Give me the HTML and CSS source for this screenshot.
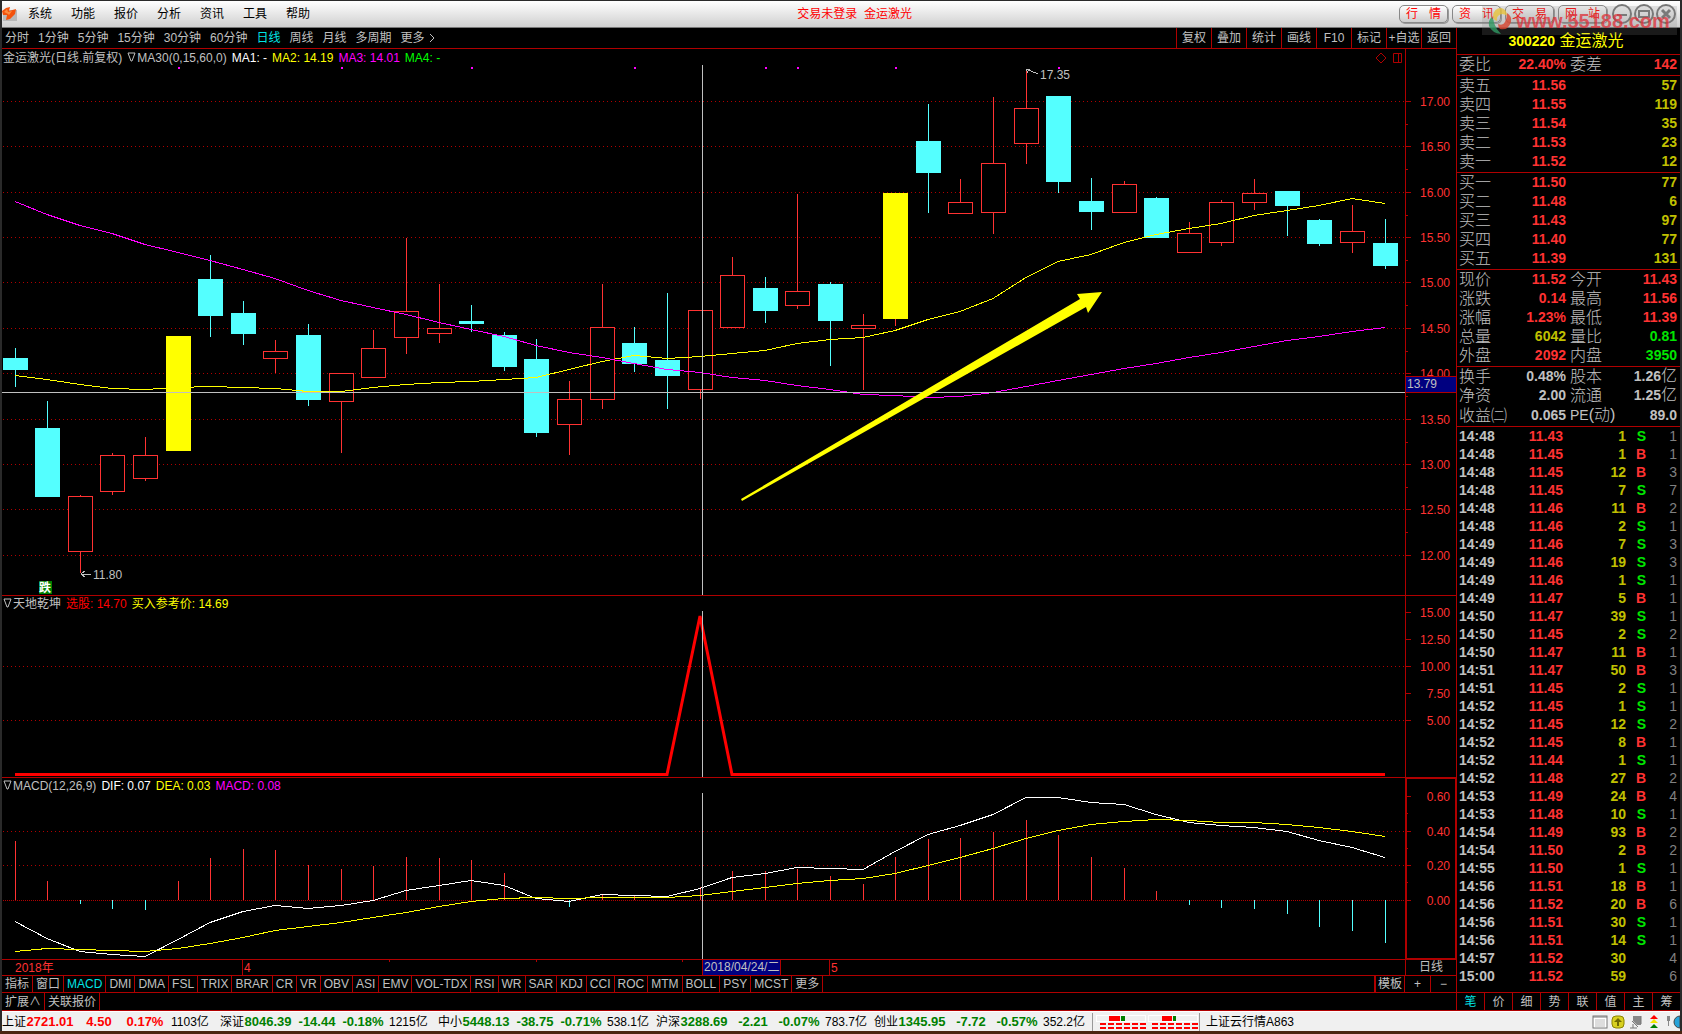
FILE: index.html
```html
<!DOCTYPE html>
<html lang="zh-CN">
<head>
    <meta charset="UTF-8">
    <meta name="viewport" content="width=device-width, initial-scale=1.0">
    <title>金运激光 300220</title>
    <link rel="stylesheet" href="styles.css">
</head>
<body>
    <header class="menubar">
        <svg class="logo" viewBox="0 0 16 16">
            <rect x="1" y="4" width="14" height="11" fill="#b8b8b8"/>
            <path d="M0 5 L4 2 L8 1 L7 5 L14 3 L13 8 L8 13 L4 14 L5 9 L1 9 Z" fill="#f4510b"/>
            <path d="M2 6 L5 3 L6 6 L10 5 L7 9 L6 8 Z" fill="#ff8a3c"/>
        </svg>
        <nav class="menu">
            <button>系统</button>
            <button>功能</button>
            <button>报价</button>
            <button>分析</button>
            <button>资讯</button>
            <button>工具</button>
            <button>帮助</button>
        </nav>
        <p class="window-title">交易未登录&nbsp; 金运激光</p>
        <div class="quick">
            <button><span>行</span><span>情</span></button>
            <button><span>资</span><span>讯</span></button>
            <button><span>交</span><span>易</span></button>
            <button><span>网</span><span>站</span></button>
        </div>
        <div class="window-buttons">
            <button aria-label="最小化"><svg viewBox="0 0 20 20"><circle cx="10" cy="10" r="9"/><path d="M5 11h10"/></svg></button>
            <button aria-label="还原"><svg viewBox="0 0 20 20"><circle cx="10" cy="10" r="9"/><path d="M5 7h10v6H5z"/></svg></button>
            <button aria-label="关闭"><svg viewBox="0 0 20 20"><circle cx="10" cy="10" r="9"/><path d="M6 6l8 8M14 6l-8 8" stroke-width="3"/></svg></button>
        </div>
        <div class="watermark">
            <svg viewBox="0 0 24 28">
                <path d="M5 9 Q6 1 13 1 Q19 2 19 9 Q14 5 10 9 Q8 11 9 14 Q5 13 5 9Z" fill="#e8c33c"/>
                <path d="M19 6 Q24 9 23 15 Q20 24 12 22 Q10 20 10 17 Q15 19 17 15 Q19 11 19 6Z" fill="#d9452f"/>
                <path d="M4 10 Q6 13 6 16 Q8 22 13 27 Q4 26 1 19 Q0 13 4 10Z" fill="#2f9a63"/>
            </svg>
            <span>www.55188.com</span>
        </div>
    </header>

    <div class="workspace">
        <main class="left">
            <div class="toolbar">
                <div class="periods">
                    <button>分时</button>
                    <button>1分钟</button>
                    <button>5分钟</button>
                    <button>15分钟</button>
                    <button>30分钟</button>
                    <button>60分钟</button>
                    <button class="active">日线</button>
                    <button>周线</button>
                    <button>月线</button>
                    <button>多周期</button>
                    <button>更多<svg class="chevron" viewBox="0 0 8 10"><path d="M2 1l4 4-4 4"/></svg></button>
                </div>
                <div class="tools">
                    <button>复权</button>
                    <button>叠加</button>
                    <button>统计</button>
                    <button>画线</button>
                    <button>F10</button>
                    <button>标记</button>
                    <button>+自选</button>
                    <button>返回</button>
                </div>
            </div>

            <section class="panel panel-main">
                <div class="plot-col">
                    <div class="legend">
                        <span>金运激光(日线.前复权)</span>
                        <span><svg class="tri" viewBox="0 0 9 10"><path d="M1 1h7L5 9H4z"/></svg>MA30(0,15,60,0)</span>
                        <span class="white">MA1: -</span>
                        <span class="yellow">MA2: 14.19</span>
                        <span class="magenta">MA3: 14.01</span>
                        <span class="green">MA4: -</span>
                        <svg class="legend-icons" viewBox="0 0 28 12"><path d="M6 1l5 5-5 5-5-5zM18.5 1.5h8v9h-8zM23.5 1.5v9"/></svg>
                    </div>
                    <svg class="plot" id="pricePlot" viewBox="0 0 1403 530" preserveAspectRatio="none"></svg>
                </div>
                <svg class="axis" id="priceAxis" viewBox="0 0 50 546" preserveAspectRatio="none"></svg>
            </section>

            <section class="panel panel-sub">
                <div class="plot-col">
                    <div class="legend">
                        <span><svg class="tri" viewBox="0 0 9 10"><path d="M1 1h7L5 9H4z"/></svg>天地乾坤</span>
                        <span class="red">选股: 14.70</span>
                        <span class="yellow">买入参考价: 14.69</span>
                    </div>
                    <svg class="plot" id="signalPlot" viewBox="0 0 1403 166" preserveAspectRatio="none"></svg>
                </div>
                <svg class="axis" id="signalAxis" viewBox="0 0 50 181" preserveAspectRatio="none"></svg>
            </section>

            <section class="panel panel-sub selected">
                <div class="plot-col">
                    <div class="legend">
                        <span><svg class="tri" viewBox="0 0 9 10"><path d="M1 1h7L5 9H4z"/></svg>MACD(12,26,9)</span>
                        <span class="white">DIF: 0.07</span>
                        <span class="yellow">DEA: 0.03</span>
                        <span class="magenta">MACD: 0.08</span>
                    </div>
                    <svg class="plot" id="macdPlot" viewBox="0 0 1403 166" preserveAspectRatio="none"></svg>
                </div>
                <svg class="axis" id="macdAxis" viewBox="0 0 50 181" preserveAspectRatio="none"></svg>
            </section>

            <div class="dates">
                <svg id="dateAxis" viewBox="0 0 1403 15" preserveAspectRatio="none"></svg>
                <span class="date-period">日线</span>
            </div>

            <div class="tabs">
                <div class="tab-list">
                    <button>指标</button><button>窗口</button><button class="active">MACD</button><button>DMI</button><button>DMA</button><button>FSL</button><button>TRIX</button><button>BRAR</button><button>CR</button><button>VR</button><button>OBV</button><button>ASI</button><button>EMV</button><button>VOL-TDX</button><button>RSI</button><button>WR</button><button>SAR</button><button>KDJ</button><button>CCI</button><button>ROC</button><button>MTM</button><button>BOLL</button><button>PSY</button><button>MCST</button><button>更多</button>
                </div>
                <div class="zoom">
                    <button class="template">模板</button>
                    <button>+</button>
                    <button>−</button>
                </div>
            </div>
            <div class="tabs tabs-extra">
                <div class="tab-list">
                    <button>扩展∧</button><button>关联报价</button>
                </div>
            </div>
        </main>

        <aside class="quote">
            <h1><b>300220</b> 金运激光</h1>
            <table class="book">
                <tbody>
                    <tr><th>委比</th><td class="up">22.40%</td><th>委差</th><td class="up">142</td></tr>
                </tbody>
                <tbody>
                    <tr><th>卖五</th><td class="up">11.56</td><td colspan="2" class="vol">57</td></tr>
                    <tr><th>卖四</th><td class="up">11.55</td><td colspan="2" class="vol">119</td></tr>
                    <tr><th>卖三</th><td class="up">11.54</td><td colspan="2" class="vol">35</td></tr>
                    <tr><th>卖二</th><td class="up">11.53</td><td colspan="2" class="vol">23</td></tr>
                    <tr><th>卖一</th><td class="up">11.52</td><td colspan="2" class="vol">12</td></tr>
                </tbody>
                <tbody>
                    <tr><th>买一</th><td class="up">11.50</td><td colspan="2" class="vol">77</td></tr>
                    <tr><th>买二</th><td class="up">11.48</td><td colspan="2" class="vol">6</td></tr>
                    <tr><th>买三</th><td class="up">11.43</td><td colspan="2" class="vol">97</td></tr>
                    <tr><th>买四</th><td class="up">11.40</td><td colspan="2" class="vol">77</td></tr>
                    <tr><th>买五</th><td class="up">11.39</td><td colspan="2" class="vol">131</td></tr>
                </tbody>
                <tbody>
                    <tr><th>现价</th><td class="up">11.52</td><th>今开</th><td class="up">11.43</td></tr>
                    <tr><th>涨跌</th><td class="up">0.14</td><th>最高</th><td class="up">11.56</td></tr>
                    <tr><th>涨幅</th><td class="up">1.23%</td><th>最低</th><td class="up">11.39</td></tr>
                    <tr><th>总量</th><td class="vol">6042</td><th>量比</th><td class="down">0.81</td></tr>
                    <tr><th>外盘</th><td class="up">2092</td><th>内盘</th><td class="down">3950</td></tr>
                </tbody>
                <tbody>
                    <tr><th>换手</th><td>0.48%</td><th>股本</th><td>1.26<i>亿</i></td></tr>
                    <tr><th>净资</th><td>2.00</td><th>流通</th><td>1.25<i>亿</i></td></tr>
                    <tr><th>收益㈡</th><td>0.065</td><th><b>PE</b>(动)</th><td>89.0</td></tr>
                </tbody>
            </table>
            <table class="ticks">
                <tbody id="ticks"></tbody>
            </table>
            <div class="quote-tabs">
                <button class="active">笔</button><button>价</button><button>细</button><button>势</button><button>联</button><button>值</button><button>主</button><button>筹</button>
            </div>
        </aside>
    </div>

    <footer class="status">
        <div class="index rise"><span>上证</span><b>2721.01</b><b>4.50</b><b>0.17%</b><span>1103亿</span></div>
        <div class="index"><span>深证</span><b>8046.39</b><b>-14.44</b><b>-0.18%</b><span>1215亿</span></div>
        <div class="index"><span>中小</span><b>5448.13</b><b>-38.75</b><b>-0.71%</b><span>538.1亿</span></div>
        <div class="index"><span>沪深</span><b>3288.69</b><b>-2.21</b><b>-0.07%</b><span>783.7亿</span></div>
        <div class="index"><span>创业</span><b>1345.95</b><b>-7.72</b><b>-0.57%</b><span>352.2亿</span></div>
        <svg class="lamps" viewBox="0 0 104 18" shape-rendering="crispEdges">
            <path d="M2.5 2.5h49v6h-49zM54.5 2.5h49v6h-49z" fill="none" stroke="#fff"/>
            <path d="M15 3h11v5H15zM68 3h10v5H68z" fill="#f00"/>
            <path d="M27 3h4v5h-4zM79 3h3v5h-3z" fill="#008000"/>
            <path d="M6 11h46M58 11h46M6 15h46M58 15h46" stroke="#f00" stroke-width="2" stroke-dasharray="6 2"/>
        </svg>
        <span class="server">上证云行情A863</span>
        <div class="tray">
            <svg viewBox="0 0 16 16"><rect x="1" y="2" width="14" height="12" fill="#fff" stroke="#777"/><path d="M1 3h14" stroke="#777"/><path d="M3 6h10M3 8h10M3 10h10M3 12h10" stroke="#bbb"/></svg>
            <svg viewBox="0 0 16 16"><rect x="2" y="2" width="12" height="12" rx="4" fill="#d8d020" stroke="#8a8400"/><path d="M8 4l4 4H9v4H7V8H4z" fill="#6f6a00"/></svg>
            <svg viewBox="0 0 16 16"><path d="M5 2h8v9H9L5 7z" fill="#888"/><path d="M4 7l6 6M5 10v4M2 14h7M13 2v8" fill="none" stroke="#777"/></svg>
            <svg viewBox="0 0 16 16"><path d="M8 1l4 4H4z" fill="#f00"/><path d="M8 5l4 4H4z" fill="#f3e600"/><path d="M8 10l4 4H4z" fill="#008000"/></svg>
            <svg viewBox="0 0 16 16"><path d="M3 2h3v5H3z" fill="#888"/><path d="M4 7h1v5H4z" fill="#888"/><path d="M16 2a6 6 0 0 0 0 12z" fill="#27a3d9" stroke="#444"/></svg>
        </div>
    </footer>

    <script src="script.js"></script>
</body>
</html>
```
FILE: styles.css
```css
* {
    box-sizing: border-box;
}

body {
    margin: 0;
    height: 100vh;
    min-height: 1034px;
    padding: 1px 2px 3px;
    display: flex;
    flex-direction: column;
    background: linear-gradient(to top, #4a2511 3px, #2a2a2a 3px);
    font-family: "Liberation Sans", "Noto Sans CJK SC", sans-serif;
    font-size: 12px;
    line-height: 16px;
    color: #c0c0c0;
}

button {
    padding: 0;
    border: 0;
    background: none;
    color: inherit;
    font: inherit;
    white-space: nowrap;
    cursor: pointer;
}

svg {
    display: block;
}

.white { color: #fff; }
.yellow { color: #ff0; }
.magenta { color: #f0f; }
.green { color: #0f0; }
.red { color: #f00; }
.active { color: #00e4e4; }

/* Menüleiste */
.menubar {
    flex: none;
    position: relative;
    display: flex;
    align-items: center;
    height: 27px;
    background: linear-gradient(#fff, #cfcfcf);
    border-bottom: 1px solid #777;
    color: #000;
}

.logo {
    width: 16px;
    height: 16px;
}

.menu {
    display: flex;
    gap: 19px;
    padding-left: 10px;
}

.window-title {
    flex: 1;
    margin: 0;
    color: #f00;
    text-align: center;
}

.quick {
    display: flex;
    gap: 4px;
}

.quick button {
    display: flex;
    justify-content: space-between;
    width: 49px;
    height: 18px;
    padding: 0 6px;
    border: 1px solid #888;
    border-radius: 5px;
    background: linear-gradient(#fff, #ccc);
    box-shadow: 1px 1px 0 #999;
    color: #f00;
}

.window-buttons {
    display: flex;
    gap: 2px;
    padding: 0 4px 0 5px;
}

.window-buttons svg {
    width: 20px;
    height: 20px;
    fill: none;
    stroke: #777;
    stroke-width: 2;
}

.watermark {
    position: absolute;
    top: 5px;
    right: 3px;
    z-index: 1;
    display: flex;
    align-items: center;
    width: 195px;
    height: 29px;
    padding-left: 6px;
    background: rgba(130, 130, 130, 0.2);
    color: rgba(222, 48, 56, 0.75);
    font-size: 20px;
    font-weight: bold;
    pointer-events: none;
}

.watermark svg {
    width: 24px;
    height: 28px;
    margin-right: 4px;
    opacity: 0.8;
}

.workspace {
    flex: 1;
    display: flex;
    min-height: 0;
    background: #000;
    border-bottom: 1px solid #b00000;
}

.left {
    flex: 1;
    min-width: 0;
    display: flex;
    flex-direction: column;
}

.toolbar {
    display: flex;
    justify-content: space-between;
    height: 21px;
    border-bottom: 1px solid #b00000;
}

.periods {
    display: flex;
    gap: 9px;
    padding-left: 3px;
}

.periods button {
    display: flex;
    align-items: center;
}

.chevron {
    width: 8px;
    height: 10px;
    margin-left: 3px;
    fill: none;
    stroke: #c0c0c0;
}

.tools {
    display: flex;
}

.tools button {
    width: 35px;
    border-left: 1px solid #b00000;
}

/* Charts */
.panel {
    display: flex;
    border-bottom: 1px solid #b00000;
}

.panel-main {
    flex: 1;
    min-height: 0;
}

.panel-sub {
    height: 182px;
}

.plot-col {
    flex: 1;
    min-width: 0;
    display: flex;
    flex-direction: column;
}

.legend {
    display: flex;
    align-items: center;
    gap: 5px;
    height: 16px;
    padding-left: 1px;
    white-space: nowrap;
}

.panel-main .legend {
    padding-top: 2px;
}

.panel-sub .legend {
    height: 15px;
}

.tri {
    display: inline-block;
    width: 9px;
    height: 10px;
    margin-right: 1px;
    fill: none;
    stroke: #c0c0c0;
}

.legend-icons {
    width: 28px;
    height: 12px;
    margin: 0 2px 0 auto;
    fill: none;
    stroke: #b00000;
}

.plot {
    flex: 1;
    width: 100%;
    min-height: 0;
}

.axis {
    flex: none;
    width: 51px;
    height: 100%;
    border-left: 1px solid #b00000;
}

.selected .axis {
    box-shadow: inset 0 0 0 1px #b00000;
}

.grid {
    stroke: #b00000;
    stroke-dasharray: 1 3;
}

.grid-zero {
    stroke: #b00000;
    stroke-dasharray: 1 1;
}

.fill-down { fill: #54ffff; }
.fill-up { fill: #ff3232; }
.fill-signal { fill: #ff0; }
.fill-mark { fill: #f0f; }

.hollow {
    fill: #000;
    stroke: #ff3232;
}

.line {
    fill: none;
    stroke-width: 1;
}

.line-yellow { stroke: #ff0; }
.line-magenta { stroke: #f0f; }
.line-white { stroke: #fff; }
.line-red { stroke: #f00; stroke-width: 3; }
.line-gray { stroke: #c0c0c0; }
.line-frame { stroke: #b00000; }

.note {
    fill: #c0c0c0;
    font-size: 12px;
}

.scale {
    fill: #ff3232;
    font-size: 12px;
}

.badge { fill: #008000; }
.badge-text { fill: #fff; font-size: 12px; font-weight: bold; }
.cursor-box { fill: #000080; stroke: #b00000; }

.dates {
    display: flex;
    height: 16px;
    border-bottom: 1px solid #b00000;
}

.dates svg {
    flex: 1;
    min-width: 0;
    height: 15px;
}

.date-period {
    width: 51px;
    border-left: 1px solid #b00000;
    line-height: 15px;
    text-align: center;
}

.tabs {
    display: flex;
    justify-content: space-between;
    height: 17px;
    border-bottom: 1px solid #b00000;
}

.tabs-extra {
    border-bottom: 0;
}

.tab-list,
.zoom {
    display: flex;
}

.tab-list button {
    padding: 0 3px;
    border-right: 1px solid #b00000;
}

.zoom button {
    width: 26px;
    border-left: 1px solid #b00000;
}

.zoom .template {
    width: 30px;
    border-left-width: 2px;
}

/* Kursdaten rechts */
.quote {
    width: 224px;
    display: flex;
    flex-direction: column;
    border-left: 1px solid #b00000;
}

.quote h1 {
    margin: 0;
    height: 27px;
    padding-right: 5px;
    border-bottom: 1px solid #b00000;
    color: #ff0;
    font-size: 16px;
    font-weight: normal;
    line-height: 26px;
    text-align: center;
}

.quote h1 b {
    font-size: 14px;
}

.book,
.ticks {
    width: 100%;
    table-layout: fixed;
    border-collapse: collapse;
    font-size: 14px;
    font-weight: bold;
}

.book th,
.book td,
.ticks td {
    padding: 0;
    text-align: right;
    white-space: nowrap;
}

.book tbody {
    border-bottom: 1px solid #b00000;
}

.book tr {
    height: 19px;
    line-height: 19px;
}

.book tr:last-child td,
.book tr:last-child th {
    padding-bottom: 1px;
}

.book th {
    width: 50px;
    padding-left: 2px;
    font-size: 16px;
    font-weight: 300;
    text-align: left;
}

.book th:nth-child(3) {
    padding-left: 4px;
}

.book th b {
    font-size: 14px;
}

.book td:nth-child(2) {
    width: 59px;
}

.book td:last-child,
.ticks td:last-child {
    padding-right: 3px;
}

.book i {
    font-size: 16px;
    font-style: normal;
    font-weight: 300;
    line-height: 16px;
}

.up { color: #ff3232; }
.down { color: #00e600; }
.vol { color: #c0c000; }

.ticks tr {
    height: 18px;
    line-height: 18px;
}

.ticks td:first-child {
    width: 50px;
    padding-left: 2px;
    text-align: left;
}

.ticks td:nth-child(2) { width: 56px; }
.ticks td:nth-child(3) { width: 63px; }
.ticks td:nth-child(4) { width: 20px; }

.ticks td:last-child {
    color: #808080;
    font-weight: normal;
}

.quote-tabs {
    display: flex;
    height: 18px;
    margin-top: auto;
    border-top: 1px solid #b00000;
}

.quote-tabs button {
    flex: 1;
}

.quote-tabs button + button {
    border-left: 1px solid #b00000;
}

/* Statusleiste */
.status {
    flex: none;
    display: flex;
    align-items: center;
    height: 20px;
    background: #f0f0f0;
    border-top: 1px solid #fff;
    color: #000;
    white-space: nowrap;
}

.index {
    display: grid;
    grid-template-columns: 24px 48px 50px 42px 54px;
    color: #000;
}

.index b {
    color: #008000;
    font-size: 13px;
    text-align: center;
}

.index.rise b {
    color: #f00;
}

.index span:last-child {
    padding-left: 5px;
}

.lamps {
    width: 108px;
    height: 18px;
    padding: 0 1px;
    border-left: 1px solid #999;
    border-right: 1px solid #999;
}

.server {
    padding-left: 6px;
}

.tray {
    display: flex;
    gap: 2px;
    margin-left: auto;
}

.tray svg {
    width: 16px;
    height: 16px;
}
```
FILE: script.js
```js
// type, high, top, bottom, low
const candles = [
    ["d", 283, 293, 305, 322], ["d", 336, 363, 432, 432], ["u", 430, 431, 487, 508],
    ["u", 388, 390, 427, 430], ["u", 372, 390, 414, 416], ["s", 271, 271, 386, 386],
    ["d", 190, 214, 251, 272], ["d", 236, 248, 269, 280], ["u", 275, 286, 294, 308],
    ["d", 259, 270, 335, 341], ["u", 308, 308, 337, 388], ["u", 265, 283, 313, 313],
    ["u", 173, 246, 273, 289], ["u", 219, 263, 269, 278], ["d", 240, 256, 259, 267],
    ["d", 267, 270, 302, 306], ["d", 274, 294, 368, 372], ["u", 316, 334, 360, 390],
    ["u", 219, 262, 335, 344], ["d", 262, 278, 299, 307], ["d", 228, 295, 311, 344],
    ["u", 245, 245, 325, 334], ["u", 192, 210, 263, 263], ["d", 212, 223, 246, 258],
    ["u", 129, 226, 241, 244], ["d", 217, 219, 256, 301], ["u", 249, 260, 264, 325],
    ["s", 128, 128, 254, 261], ["d", 39, 76, 108, 148], ["u", 114, 137, 149, 149],
    ["u", 32, 98, 148, 169], ["u", 5, 43, 79, 99], ["d", 31, 31, 117, 128],
    ["d", 113, 136, 147, 165], ["u", 116, 119, 148, 148], ["d", 132, 133, 173, 173],
    ["u", 157, 168, 188, 188], ["u", 135, 137, 178, 181], ["u", 114, 128, 138, 145],
    ["d", 126, 126, 141, 171], ["d", 154, 155, 179, 181], ["u", 140, 166, 178, 188],
    ["d", 154, 178, 201, 204]
];

const ma2 = [310, 314, 319, 323, 324, 322, 321, 322, 323, 326, 326, 322, 319, 317, 316, 314, 312, 304, 296, 290, 293, 291, 288, 285, 278, 274, 272, 265, 254, 246, 233, 212, 196, 189, 177, 169, 163, 158, 150, 145, 140, 133, 138];
const ma3 = [136, 149, 160, 168, 179, 187, 195, 204, 213, 225, 235, 242, 249, 257, 264, 271, 280, 287, 292, 298, 304, 307, 312, 315, 320, 324, 329, 330, 332, 331, 327, 321, 315, 309, 303, 298, 292, 287, 281, 275, 271, 266, 262];
const dif = [128, 145, 158, 161, 163, 146, 129, 118, 112, 115, 112, 107, 97, 92, 87, 92, 105, 108, 101, 102, 103, 95, 84, 80, 74, 75, 76, 58, 41, 32, 21, 4, 4, 9, 11, 21, 29, 32, 34, 38, 47, 54, 64];
const dea = [158, 155, 156, 157, 158, 155, 150, 144, 137, 133, 129, 124, 119, 113, 108, 105, 104, 105, 104, 104, 104, 102, 98, 94, 90, 87, 85, 80, 72, 64, 55, 45, 37, 31, 28, 26, 27, 29, 29, 31, 34, 38, 43];
const macd = [48, 88, 111, 116, 117, 88, 65, 56, 57, 72, 76, 73, 64, 65, 67, 80, 107, 114, 102, 103, 107, 94, 78, 78, 76, 83, 91, 64, 46, 45, 39, 27, 42, 64, 75, 98, 112, 115, 116, 121, 134, 138, 150];
const marks = [5, 10, 14, 19, 23, 24, 27, 32];

const ticks = [
    ["14:48", "11.43", 1, "S", 1], ["14:48", "11.45", 1, "B", 1], ["14:48", "11.45", 12, "B", 3],
    ["14:48", "11.45", 7, "S", 7], ["14:48", "11.46", 11, "B", 2], ["14:48", "11.46", 2, "S", 1],
    ["14:49", "11.46", 7, "S", 3], ["14:49", "11.46", 19, "S", 3], ["14:49", "11.46", 1, "S", 1],
    ["14:49", "11.47", 5, "B", 1], ["14:50", "11.47", 39, "S", 1], ["14:50", "11.45", 2, "S", 2],
    ["14:50", "11.47", 11, "B", 1], ["14:51", "11.47", 50, "B", 3], ["14:51", "11.45", 2, "S", 1],
    ["14:52", "11.45", 1, "S", 1], ["14:52", "11.45", 12, "S", 2], ["14:52", "11.45", 8, "B", 1],
    ["14:52", "11.44", 1, "S", 1], ["14:52", "11.48", 27, "B", 2], ["14:53", "11.49", 24, "B", 4],
    ["14:53", "11.48", 10, "S", 1], ["14:54", "11.49", 93, "B", 2], ["14:54", "11.50", 2, "B", 2],
    ["14:55", "11.50", 1, "S", 1], ["14:56", "11.51", 18, "B", 1], ["14:56", "11.52", 20, "B", 6],
    ["14:56", "11.51", 30, "S", 1], ["14:56", "11.51", 14, "S", 1], ["14:57", "11.52", 30, "", 4],
    ["15:00", "11.52", 59, "", 6]
];

const x = i => 13 + Math.floor(i * 1370 / 42);

function rect(cls, left, top, width, height) {
    return `<rect class="${cls}" x="${left}" y="${top}" width="${width}" height="${height}" shape-rendering="crispEdges"/>`;
}

function path(cls, d) {
    return `<path class="line ${cls}" d="${d}" shape-rendering="crispEdges"/>`;
}

function series(cls, values) {
    return path(cls, "M" + values.map((v, i) => `${x(i)} ${v + 0.5}`).join("L"));
}

function grid(cls, rows) {
    return rows.map(y => path(cls, `M1 ${y + 0.5}H1403`)).join("");
}

function axis(labels, minor) {
    return labels.map(([y, text]) => path("line-frame", `M0 ${y + 0.5}H5`) +
        `<text class="scale" x="44" y="${y + 5}" text-anchor="end">${text}</text>`).join("") +
        minor.map(y => path("line-frame", `M0 ${y + 0.5}H2`)).join("");
}

function draw(id, content) {
    document.getElementById(id).innerHTML = content;
}

// Kerzenchart
const priceRows = [36, 81, 127, 172, 217, 263, 308, 354, 399, 444, 490];
let price = grid("grid", priceRows);
candles.forEach(([type, high, top, bottom, low], i) => {
    const cls = type === "d" ? "fill-down" : "fill-up";
    price += rect(cls, x(i), high, 1, low - high);
    if (type === "u") {
        price += rect("hollow", x(i) - 11.5, top + 0.5, 24, bottom - top - 1);
    } else {
        price += rect(type === "s" ? "fill-signal" : cls, x(i) - 12, top, 25, bottom - top);
    }
});
price += marks.map(i => rect("fill-mark", x(i), 2, 2, 2)).join("");
price += series("line-yellow", ma2) + series("line-magenta", ma3);
price += path("line-gray", "M0 327.5H1403M700.5 0V530");
price += path("line-gray", "M1024 4L1036 9M1024 4H1028M1024 4L1026 8M79 509H89M79 509L83 506M79 509L83 512");
price += `<text class="note" x="1038" y="14">17.35</text><text class="note" x="91" y="514">11.80</text>`;
price += rect("badge", 37, 516, 13, 13) + `<text class="badge-text" x="37" y="527">跌</text>`;
price += `<path class="fill-signal" d="M739 434L1078 234L1075 229L1100 227L1086 248L1084 242L740 436Z"/>`;
draw("pricePlot", price);

const priceTexts = ["17.00", "16.50", "16.00", "15.50", "15.00", "14.50", "14.00", "13.50", "13.00", "12.50", "12.00"];
draw("priceAxis",
    axis(priceRows.map((y, i) => [y + 16, priceTexts[i]]), priceRows.slice(0, -1).map(y => y + 39)) +
    rect("cursor-box", -0.5, 327.5, 51, 16) + `<text class="note" x="1" y="339">13.79</text>`);

// Signal
draw("signalPlot",
    grid("grid", [55, 109]) +
    `<path class="line line-red" d="M${x(0)} 163.5H${x(20)}L${x(21)} 5L${x(22)} 163.5H${x(42)}"/>` +
    path("line-gray", "M700.5 0V166"));
draw("signalAxis", axis([[16, "15.00"], [43, "12.50"], [70, "10.00"], [97, "7.50"], [124, "5.00"]], []));

// MACD
draw("macdPlot",
    grid("grid", [38, 72]) + grid("grid-zero", [107]) +
    macd.map((v, i) => v < 107
        ? rect("fill-up", x(i), v, 1, 107 - v)
        : rect("fill-down", x(i), 107, 1, v - 107)).join("") +
    series("line-white", dif) + series("line-yellow", dea) +
    path("line-gray", "M700.5 0V166"));
draw("macdAxis", axis([[18, "0.60"], [53, "0.40"], [87, "0.20"], [122, "0.00"]], [35, 70, 104]));

draw("dateAxis",
    path("line-frame", "M240.5 0V15M387.5 0V2M534.5 0V2M680.5 0V2M827.5 0V15") +
    rect("cursor-box", 700.5, -0.5, 78, 16) +
    `<text class="scale" x="13" y="12">2018年</text><text class="scale" x="242" y="12">4</text>` +
    `<text class="scale" x="829" y="12">5</text><text class="note" x="702" y="11">2018/04/24/二</text>`);

document.getElementById("ticks").innerHTML = ticks.map(([time, value, volume, side, count]) =>
    `<tr><td>${time}</td><td class="up">${value}</td><td class="vol">${volume}</td>` +
    `<td class="${side === "S" ? "down" : "up"}">${side}</td><td>${count}</td></tr>`).join("");
```
